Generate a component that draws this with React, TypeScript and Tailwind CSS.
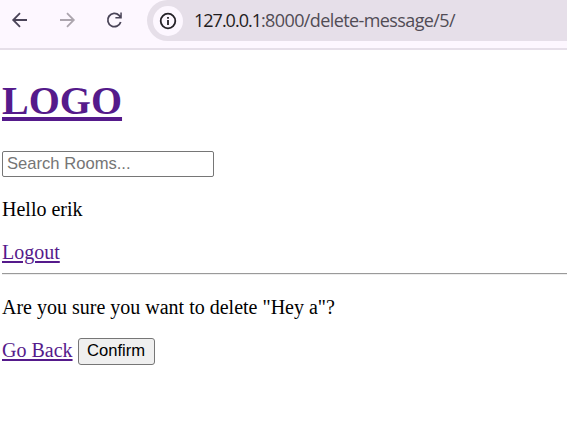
import React from "react";

const link = "text-[#551a8b] underline";

export default function App() {
  return (
    <div className="flex h-[446px] w-[567px] flex-col overflow-hidden bg-white font-['Liberation_Serif',serif] text-[20px] leading-[23px] text-black">
      <header className="flex h-[50px] shrink-0 items-start border-b-2 border-[#e6dfe9] bg-[#fdf7ff]">
        <div className="flex h-[39px] w-[147px] items-center gap-[27px] pl-[10px]">
          <svg width="20" height="20" viewBox="0 0 20 20" fill="none" stroke="#4a4458" strokeWidth="1.8">
            <path d="M17 10H3.5M10 3.2L3.2 10L10 16.8" />
          </svg>
          <svg width="20" height="20" viewBox="0 0 20 20" fill="none" stroke="#aca5ae" strokeWidth="1.8">
            <path d="M3 10H16.5M10 3.2L16.8 10L10 16.8" />
          </svg>
          <svg width="20" height="20" viewBox="0 0 20 20" fill="none" stroke="#4a4458" strokeWidth="1.8">
            <path d="M16.7 12A6.6 6.6 0 1 1 15.1 5.4L16.3 6.6" />
            <path d="M17.8 2.5V8.4H11.4V6.9H14.6L16.3 5.2V2.5Z" fill="#4a4458" stroke="none" />
          </svg>
        </div>
        <div className="flex h-[41px] flex-1 items-center rounded-l-full bg-[#e6dfe9] pl-[6px]">
          <span className="flex size-[30px] items-center justify-center rounded-full bg-[#fdf7ff]">
            <svg width="18" height="18" viewBox="0 0 18 18" fill="none" stroke="#242127" strokeWidth="1.8">
              <circle cx="9" cy="9" r="7.3" />
              <path d="M9 8V13M9 5V6.7" />
            </svg>
          </span>
          <span className="pl-[11px] font-['Open_Sans',sans-serif] text-[18px] tracking-[-0.6px] text-[#514c55]">
            <span className="tracking-[-1px] text-[#1f1c20]">127.0.0.1</span>:8000/delete-message/5/
          </span>
        </div>
      </header>
      <main className="flex flex-col items-start pl-[2px]">
        <h1 className="mt-[28px] text-[40px] leading-[46px] font-bold">
          <a className={`${link} decoration-[4px] underline-offset-[3px]`}>LOGO</a>
        </h1>
        <input
          className="mt-[27px] h-[26px] w-[212px] rounded-[2px] border border-[#767676] px-[4px] font-['Liberation_Sans',sans-serif] text-[16.6px] placeholder:text-[#757575]"
          placeholder="Search Rooms..."
        />
        <p className="mt-[21px]">Hello erik</p>
        <a className={`mt-[20px] decoration-[2px] underline-offset-[2px] ${link}`}>Logout</a>
        <hr className="mt-[9px] h-[2px] w-full border-t border-b border-t-[#9a9a9a] border-b-[#eeeeee]" />
        <p className="mt-[21px]">Are you sure you want to delete "Hey a"?</p>
        <div className="mt-[19px] flex items-start gap-[5px]">
          <a className={`pt-px decoration-[2px] underline-offset-[2px] ${link}`}>Go Back</a>
          <button className="h-[27px] w-[77px] rounded-[3px] border border-[#767676] bg-[#efefef] pb-[2px] font-['Liberation_Sans',sans-serif] text-[16.6px]">
            Confirm
          </button>
        </div>
      </main>
    </div>
  );
}
